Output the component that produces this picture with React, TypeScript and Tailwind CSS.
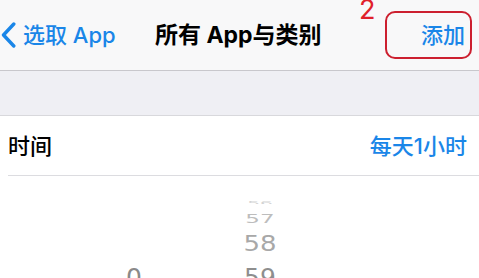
export default function App() {
  return (
    <div className="h-[278px] w-[479px] overflow-hidden bg-white font-['Inter','Noto_Sans_CJK_SC',sans-serif]">
      {/* nav bar */}
      <div className="relative flex h-[71px] items-center justify-between border-b border-[#c8c7cc] bg-[#f8f8f9]">
        <div className="flex items-center gap-[7px] pl-[1px] text-[#1a86e8]">
          <svg width="15" height="26" viewBox="0 0 15 26" fill="none">
            <path d="M12.8 2 L2.5 13 L12.8 24" stroke="#1a86e8" strokeWidth="3.4" strokeLinecap="round" strokeLinejoin="round" />
          </svg>
          <span className="text-[22px] leading-none font-medium">选取 App</span>
        </div>
        <span className="absolute left-[155px] text-[23px] leading-none font-bold text-black">所有 App与类别</span>
        <div className="relative mr-[7px] flex h-[48px] w-[87px] items-center justify-end rounded-[10px] border-2 border-[#cc1f2f] pr-[5px]">
          <span className="text-[22px] leading-none font-medium text-[#1a86e8]">添加</span>
          <span className="absolute -top-[17px] -left-[28px] text-[27px] leading-none text-[#e0202a]">2</span>
        </div>
      </div>

      {/* spacer section */}
      <div className="h-[45px] border-b border-[#d8d8dc] bg-[#efeff4]"></div>

      {/* time row */}
      <div className="pl-[8px]">
        <div className="flex h-[60px] items-center justify-between border-b border-[#dcdce0] pr-[12px]">
          <span className="text-[22px] leading-none font-medium text-black">时间</span>
          <span className="text-[22px] leading-none font-medium text-[#1a86e8]">每天1小时</span>
        </div>
      </div>

      {/* picker */}
      <div className="flex pl-[114px] gap-[86px] font-['DejaVu_Sans',sans-serif]">
        <div className="flex w-[40px] flex-col items-center pt-[88px]">
          <div className="flex h-[26px] items-center text-[25px] leading-none text-[#8a8a8a]">0</div>
        </div>
        <div className="flex w-[40px] flex-col items-center pt-[25px]">
          <div className="flex h-[3px] items-center overflow-hidden">
            <span className="scale-y-[0.25] text-[20px] leading-none text-[#d4d4d4]">56</span>
          </div>
          <div className="mt-[4px] flex h-[20px] items-center">
            <span className="scale-y-[0.55] text-[23px] leading-none text-[#bdbdbd]">57</span>
          </div>
          <div className="mt-[2px] flex h-[26px] items-center">
            <span className="scale-y-[0.85] text-[26px] leading-none text-[#a8a8a8]">58</span>
          </div>
          <div className="mt-[8px] flex h-[26px] items-center">
            <span className="text-[25px] leading-none text-[#8e8e8e]">59</span>
          </div>
        </div>
      </div>
    </div>
  );
}
